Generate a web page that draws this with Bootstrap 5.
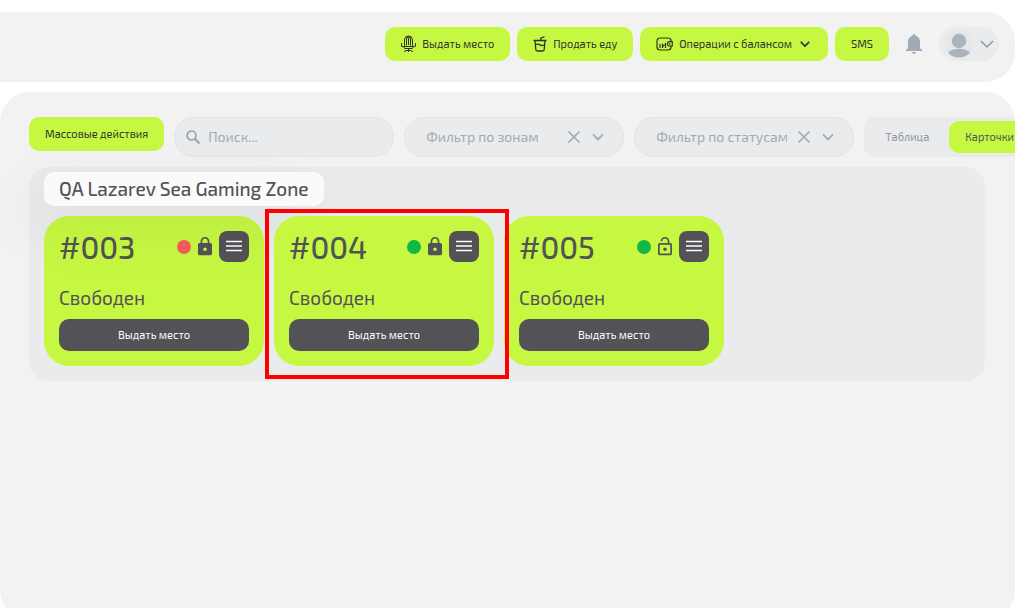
<!DOCTYPE html>
<html lang="ru">
<head>
<meta charset="utf-8">
<meta name="viewport" content="width=device-width, initial-scale=1">
<title>QA Lazarev Sea Gaming Zone</title>
<link href="https://cdn.jsdelivr.net/npm/bootstrap@5.3.0/dist/css/bootstrap.min.css" rel="stylesheet">
<style>
:root { --lime: #c6f842; --ink: #2f3330; --slate: #525257; --muted: #9fabb7; --panel: #f2f2f2; --field: #e9ebed; }
body { font-family: "Exo 2", Roboto, "Noto Sans", sans-serif; font-size: 11px; line-height: 16px; color: var(--slate); height: 100vh; overflow: hidden; background: #fff; }
svg { display: block; flex: none; }
.page { padding: 12px 10px 0 0; }
.topbar { height: 70px; padding: 0 16px 6px; background: var(--panel); border-radius: 0 30px 30px 0; }
.btn { --bs-btn-font-size: 11px; --bs-btn-line-height: 16px; --bs-btn-border-width: 0; --bs-btn-border-radius: 10px; white-space: nowrap; }
.btn-lime { --bs-btn-color: var(--ink); --bs-btn-bg: var(--lime); --bs-btn-hover-bg: #b8ea35; --bs-btn-active-bg: #b8ea35; --bs-btn-padding-x: 16px; --bs-btn-padding-y: 9px; }
.btn-slate { --bs-btn-color: #fff; --bs-btn-bg: var(--slate); --bs-btn-hover-color: #fff; --bs-btn-hover-bg: #414146; --bs-btn-padding-y: 8px; }
.topbar-actions { gap: 7px; }
.topbar-actions .btn { height: 34px; }
.btn-icon-gap { gap: 6px; }
.bell { margin: 0 9px; }
.profile { height: 34px; padding: 0 5px 0 6px; gap: 7px; background: var(--field); border-radius: 17px; color: #8f99a3; }
.workspace { min-height: calc(100vh - 80px); margin-top: 10px; padding: 25px 0 20px 29px; background: var(--panel); border-radius: 30px; overflow: hidden; }
.toolbar { gap: 10px; }
.pill { width: 220px; height: 40px; flex: none; background: var(--field); border: 1px solid #e0e3e7; border-radius: 20px; color: var(--muted); }
.pill input, .pill select { min-width: 0; flex: 1; padding: 0; border: 0; outline: 0; background: transparent; color: inherit; appearance: none; font-size: 14px; line-height: 20px; }
.pill input::placeholder { color: var(--muted); opacity: 1; }
.pill .btn { color: inherit; }
.pill-search { padding: 0 12px 0 10px; gap: 7px; }
.pill-filter { padding: 0 18px 0 21px; gap: 10px; }
.switcher { height: 40px; flex: none; padding: 4px; gap: 3px; background: var(--field); border-radius: 10px; }
.switcher .btn { --bs-btn-padding-x: 16px; --bs-btn-padding-y: 8px; }
.switcher .btn-lime { --bs-btn-color: var(--slate); }
.btn-tab { --bs-btn-color: #8f969e; width: 78px; }
.zone { margin: 10px 30px 0 0; padding: 5px 15px 15px; background: var(--field); border-radius: 20px; }
.zone-name { position: relative; z-index: 1; width: fit-content; margin: 0 0 10px; padding: 5px 15px; font-size: 19px; line-height: 24px; font-weight: 500; background: #fafafa; border-radius: 10px; box-shadow: -15px 20px 60px rgba(0,0,0,.08); }
.seats { gap: 10px; }
.seat { position: relative; width: 220px; height: 150px; padding: 15px; background: var(--lime); border-radius: 25px; }
.seat-number { font-size: 31px; line-height: 31px; font-weight: 500; }
.seat-tools { gap: 6px; }
.state { width: 14px; height: 14px; border-radius: 50%; background: #13b747; }
.state-off { background: #f85d5a; }
.btn-menu { width: 30px; height: 31px; padding: 7px; border-radius: 8px; }
.seat-status { font-size: 19px; line-height: 24px; margin: 0 0 9px; }
.marked { z-index: 2; }
.marked::after { content: ""; position: absolute; inset: -7px -15px -13px -9px; border: 4px solid #f00; pointer-events: none; }
</style>
</head>
<body>
<svg class="d-none" aria-hidden="true">
  <symbol id="chevron" viewBox="0 0 10 10"><path d="M1.500 3.200 5 6.700l3.500-3.500" fill="none" stroke="currentColor" stroke-width="1.300"/></symbol>
  <symbol id="cross" viewBox="0 0 14 14"><path d="M1.500 1.500l11 11m0-11-11 11" fill="none" stroke="currentColor" stroke-width="1.700"/></symbol>
  <symbol id="menu" viewBox="0 0 16 16"><path d="M0 2.500h16M0 7h16M0 11.500h16" stroke="#fff" stroke-width="1.500"/></symbol>
  <symbol id="locked" viewBox="3 0 18 24"><path fill="currentColor" d="M18 8h-1V6c0-2.760-2.240-5-5-5S7 3.240 7 6v2H6c-1.100 0-2 .9-2 2v10c0 1.100.9 2 2 2h12c1.100 0 2-.9 2-2V10c0-1.100-.9-2-2-2zm-6 9c-1.100 0-2-.9-2-2s.9-2 2-2 2 .9 2 2-.9 2-2 2zm3.100-9H8.900V6c0-1.710 1.390-3.100 3.100-3.100s3.100 1.390 3.100 3.100z"/></symbol>
  <symbol id="unlocked" viewBox="3 0 18 24"><path fill="currentColor" d="M12 17c1.100 0 2-.9 2-2s-.9-2-2-2-2 .9-2 2 .9 2 2 2zm6-9h-1V6c0-2.760-2.240-5-5-5S7 3.240 7 6h1.900c0-1.710 1.390-3.100 3.100-3.100s3.100 1.390 3.100 3.100v2H6c-1.100 0-2 .9-2 2v10c0 1.100.9 2 2 2h12c1.100 0 2-.9 2-2V10c0-1.100-.9-2-2-2zm0 12H6V10h12z"/></symbol>
</svg>
<div class="page">
  <header class="topbar d-flex align-items-center justify-content-end">
    <div class="topbar-actions d-flex align-items-center">
      <button type="button" class="btn btn-lime btn-icon-gap d-flex align-items-center">
        <svg width="15" height="18" viewBox="0 0 15 18" fill="none" stroke="currentColor"><path d="M3.500 11V5a4 4 0 0 1 8 0v6M5.500 10.500V4a2 2 0 0 1 4 0v6.500M7.500 3v7M5 1.800h5M3 11.500h9M.6 8v3.500h2l1 2h7.800l1-2h2V8M7.500 13.500V17M3 16.800l2-1.300h5l2 1.300"/></svg>
        Выдать место</button>
      <button type="button" class="btn btn-lime btn-icon-gap d-flex align-items-center">
        <svg width="14" height="16" viewBox="0 0 14 16" fill="none" stroke="currentColor" stroke-width="1.300"><path d="M.5 4.500h13M2 4.500l.8 9q.1 1.500 1.600 1.500h5.200q1.500 0 1.600-1.500l.8-9M7.500 4.500 8 2l3.500-1.200M2.500 8.500q2.300-1 4.500.4t4.700-.4"/></svg>
        Продать еду</button>
      <button type="button" class="btn btn-lime btn-icon-gap d-flex align-items-center">
        <svg width="17" height="14" viewBox="0 0 17 14" fill="none" stroke="currentColor" stroke-width="1.200"><path d="M15 4V3.500Q15 1 12 1H4Q1 1 1 4v6q0 3 3 3h8q3 0 3-3V9.500M16.300 4.600h-2.800q-2 0-2 2.200t2 2.200h2.800zM13 6.800h1.500M4 7v4M6.500 6.500v4.500M9.500 6v5M6.500 10l2-2.500"/></svg>
        <span>Операции с балансом</span>
        <svg width="14" height="12"><use href="#chevron"/></svg></button>
      <button type="button" class="btn btn-lime">SMS</button>
    </div>
    <button type="button" class="btn bell p-2" aria-label="Уведомления">
      <svg width="16" height="20" viewBox="0 0 16 20" fill="#9eabb6"><path d="M8 0q1.400 0 1.500 1.700Q14 3 14 8v6l2 2v1H0v-1l2-2V8q0-5 4.500-6.300Q6.600 0 8 0zM6 18h4q-.4 2-2 2t-2-2z"/></svg></button>
    <button type="button" class="btn profile d-flex align-items-center" aria-label="Профиль">
      <svg width="28" height="28" viewBox="0 0 28 28"><circle cx="14" cy="14" r="14" fill="#e5e8eb"/><g fill="#aab4bc"><circle cx="14" cy="11" r="7.200"/><path d="M3 22.500Q7 18.800 14 18.800t11 3.700Q21 27.500 14 27.500T3 22.500z"/></g></svg>
      <svg width="14" height="14" viewBox="0 0 14 14" fill="none" stroke="currentColor" stroke-width="1.500"><path d="M1 4l6 6 6-6"/></svg></button>
  </header>

  <main class="workspace">
    <div class="toolbar d-flex align-items-start">
      <button type="button" class="btn btn-lime">Массовые действия</button>
      <div class="pill pill-search d-flex align-items-center">
        <svg width="16" height="16" viewBox="0 0 16 16" fill="none" stroke="#98a2ac"><circle cx="6.500" cy="6.500" r="4.500" stroke-width="1.700"/><path d="M10 10l4.500 4.500" stroke-width="2"/></svg>
        <input type="text" placeholder="Поиск..." aria-label="Поиск">
      </div>
      <div class="pill pill-filter d-flex align-items-center">
        <select aria-label="Фильтр по зонам"><option>Фильтр по зонам</option></select>
        <button type="button" class="btn p-0 border-0" aria-label="Очистить зоны"><svg width="14" height="14"><use href="#cross"/></svg></button>
        <svg width="14" height="14"><use href="#chevron"/></svg>
      </div>
      <div class="pill pill-filter d-flex align-items-center">
        <select aria-label="Фильтр по статусам"><option>Фильтр по статусам</option></select>
        <button type="button" class="btn p-0 border-0" aria-label="Очистить статусы"><svg width="14" height="14"><use href="#cross"/></svg></button>
        <svg width="14" height="14"><use href="#chevron"/></svg>
      </div>
      <div class="switcher d-flex">
        <button type="button" class="btn btn-tab">Таблица</button>
        <button type="button" class="btn btn-lime">Карточки</button>
      </div>
    </div>

    <section class="zone">
      <h1 class="zone-name">QA Lazarev Sea Gaming Zone</h1>
      <div class="seats d-flex flex-wrap">
        <article class="seat d-flex flex-column">
          <div class="d-flex justify-content-between align-items-start">
            <span class="seat-number">#003</span>
            <div class="seat-tools d-flex align-items-center"><span class="state state-off"></span><svg width="16" height="21"><use href="#locked"/></svg><button type="button" class="btn btn-slate btn-menu" aria-label="Меню"><svg width="16" height="16"><use href="#menu"/></svg></button></div>
          </div>
          <p class="seat-status mt-auto">Свободен</p>
          <button type="button" class="btn btn-slate">Выдать место</button>
        </article>
        <article class="seat marked d-flex flex-column">
          <div class="d-flex justify-content-between align-items-start">
            <span class="seat-number">#004</span>
            <div class="seat-tools d-flex align-items-center"><span class="state"></span><svg width="16" height="21"><use href="#locked"/></svg><button type="button" class="btn btn-slate btn-menu" aria-label="Меню"><svg width="16" height="16"><use href="#menu"/></svg></button></div>
          </div>
          <p class="seat-status mt-auto">Свободен</p>
          <button type="button" class="btn btn-slate">Выдать место</button>
        </article>
        <article class="seat d-flex flex-column">
          <div class="d-flex justify-content-between align-items-start">
            <span class="seat-number">#005</span>
            <div class="seat-tools d-flex align-items-center"><span class="state"></span><svg width="16" height="21"><use href="#unlocked"/></svg><button type="button" class="btn btn-slate btn-menu" aria-label="Меню"><svg width="16" height="16"><use href="#menu"/></svg></button></div>
          </div>
          <p class="seat-status mt-auto">Свободен</p>
          <button type="button" class="btn btn-slate">Выдать место</button>
        </article>
      </div>
    </section>
  </main>
</div>
<script src="https://cdn.jsdelivr.net/npm/bootstrap@5.3.0/dist/js/bootstrap.bundle.min.js"></script>
</body>
</html>
